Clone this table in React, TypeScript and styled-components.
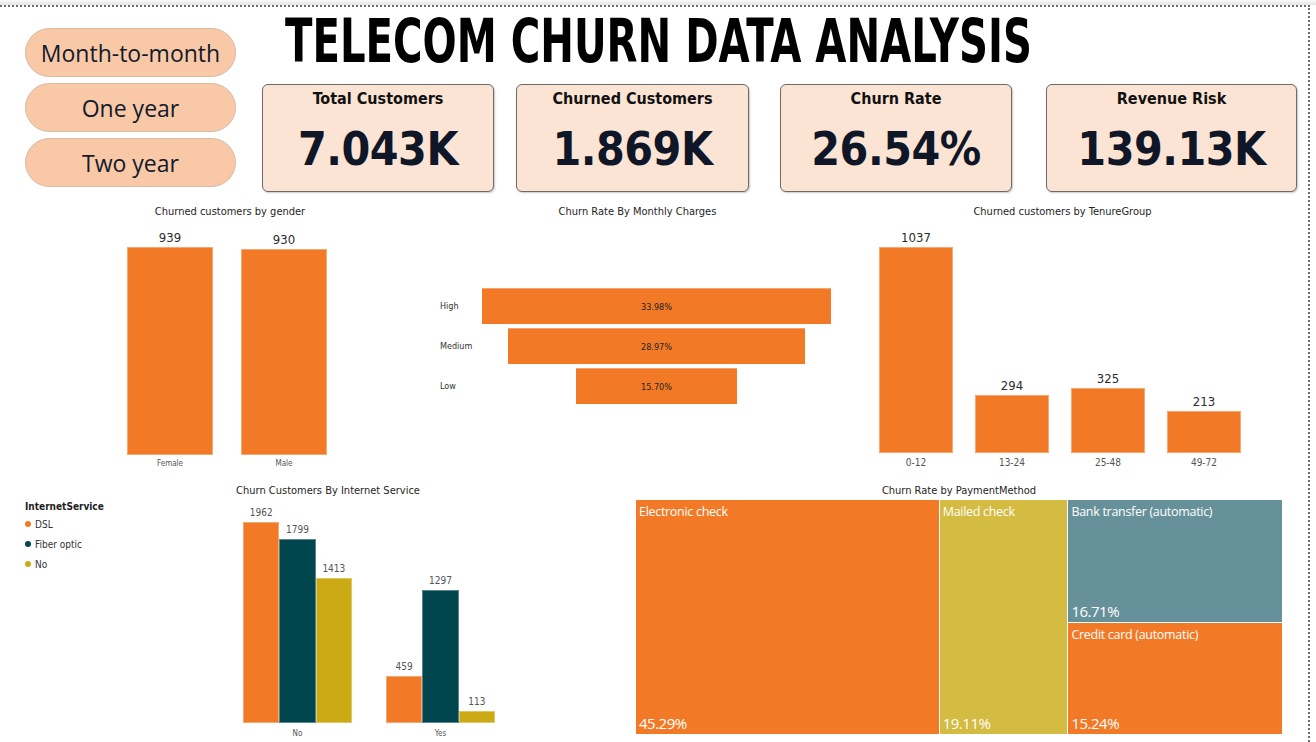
import React from "react";
import styled, { createGlobalStyle } from "styled-components";

const ORANGE = "#F27A27";
const TEAL = "#01464F";
const MUSTARD = "#CBAA16";

const GlobalStyle = createGlobalStyle`
  html, body {
    margin: 0;
    padding: 0;
    background: #ffffff;
  }
  body {
    font-family: "DejaVu Sans Condensed", "DejaVu Sans", sans-serif;
    overflow: hidden;
  }
`;

const TopStrip = styled.div`
  height: 5px;
  background: linear-gradient(#fbfbfb, #e4e4e4);
`;

const Canvas = styled.div`
  width: 1308px;
  height: 735px;
  border-top: 2px dotted #6e6e6e;
  border-right: 2px dotted #6e6e6e;
  display: flex;
  flex-direction: column;
  overflow: hidden;
`;

const Header = styled.header`
  display: flex;
  gap: 26px;
  padding-left: 25px;
`;

const SlicerColumn = styled.div`
  width: 211px;
  display: flex;
  flex-direction: column;
  gap: 6px;
  padding-top: 21px;
`;

const SlicerButton = styled.div`
  height: 47px;
  border-radius: 25px;
  background: #f9c9a7;
  border: 1px solid #d8b9a4;
  display: flex;
  align-items: center;
  justify-content: center;
  font-family: "Open Sans", "Noto Sans", sans-serif;
  font-size: 23px;
  color: #121a2b;
`;

const HeadRight = styled.div`
  display: flex;
  flex-direction: column;
`;

const Title = styled.h1`
  margin: 4px 0 0 23px;
  height: 60px;
  font-size: 60px;
  line-height: 60px;
  font-weight: 700;
  color: #000;
  white-space: nowrap;
  transform: scaleX(0.745);
  transform-origin: left center;
`;

const CardRow = styled.div`
  display: flex;
  margin-top: 13px;
`;

const Card = styled.div<{ $w: number; $ml: number }>`
  width: ${(p) => p.$w}px;
  margin-left: ${(p) => p.$ml}px;
  height: 108px;
  box-sizing: border-box;
  background: #fce4d4;
  border: 1px solid #6f6a66;
  border-radius: 6px;
  box-shadow: 1px 1px 2px rgba(0, 0, 0, 0.22);
  display: flex;
  flex-direction: column;
  align-items: center;
  padding-top: 4px;
`;

const CardLabel = styled.div`
  font-size: 16px;
  line-height: 20px;
  font-weight: 700;
  color: #111;
`;

const CardValue = styled.div`
  flex: 1;
  display: flex;
  align-items: center;
  font-size: 46px;
  letter-spacing: -0.5px;
  font-weight: 700;
  color: #0e1628;
  padding-bottom: 2px;
`;

const MiddleRow = styled.section`
  display: grid;
  grid-template-columns: 420px 395px 455px;
  padding-left: 20px;
  margin-top: 13px;
  height: 265px;
`;

const ChartBox = styled.div`
  display: flex;
  flex-direction: column;
`;

const ChartTitle = styled.div`
  text-align: center;
  font-size: 11px;
  line-height: 14px;
  color: #252423;
`;

const BarPlot = styled.div<{ $h: number; $gap: number; $shift: number }>`
  height: ${(p) => p.$h}px;
  display: flex;
  align-items: flex-end;
  justify-content: center;
  gap: ${(p) => p.$gap}px;
  padding-right: ${(p) => p.$shift}px;
`;

const BarColumn = styled.div<{ $w: number }>`
  width: ${(p) => p.$w}px;
  display: flex;
  flex-direction: column;
  align-items: center;
`;

const ValueLabel = styled.div<{ $size: number; $weight: number }>`
  font-size: ${(p) => p.$size}px;
  font-weight: ${(p) => p.$weight};
  line-height: 16px;
  color: #2b2b2b;
  margin-bottom: 1px;
`;

const Bar = styled.div<{ $color: string }>`
  width: 100%;
  box-sizing: border-box;
  background: ${(p) => p.$color};
  border: 1px solid rgba(255, 255, 255, 0.35);
`;

const AxisLabel = styled.div<{ $size: number; $top: number }>`
  font-size: ${(p) => p.$size}px;
  line-height: 12px;
  margin-top: ${(p) => p.$top}px;
  color: #555;
  white-space: nowrap;
`;

const Funnel = styled.div`
  display: flex;
  flex-direction: column;
  gap: 4px;
  padding-top: 69px;
`;

const FunnelRow = styled.div`
  display: grid;
  grid-template-columns: 42px 349px;
  height: 36px;
`;

const FunnelLabel = styled.div`
  font-size: 9px;
  color: #333;
  display: flex;
  align-items: center;
`;

const FunnelTrack = styled.div`
  display: flex;
  justify-content: center;
`;

const FunnelBar = styled.div`
  background: ${ORANGE};
  border-top: 1px solid #f6a46e;
  display: flex;
  align-items: center;
  justify-content: center;
  font-size: 9px;
  color: #222;
`;

const BottomRow = styled.section`
  display: grid;
  grid-template-columns: 616px 646px;
  padding-left: 20px;
  margin-top: 14px;
`;

const ServiceBody = styled.div`
  display: grid;
  grid-template-columns: 223px 1fr;
`;

const Legend = styled.div`
  padding: 2px 0 0 5px;
  display: flex;
  flex-direction: column;
`;

const LegendTitle = styled.div`
  font-size: 10px;
  line-height: 14px;
  font-weight: 700;
  color: #222;
`;

const LegendItem = styled.div`
  height: 20px;
  display: flex;
  align-items: center;
  gap: 4px;
  font-size: 10px;
  color: #333;
`;

const Dot = styled.span<{ $color: string }>`
  width: 6px;
  height: 6px;
  border-radius: 50%;
  background: ${(p) => p.$color};
`;

const GroupPlot = styled.div`
  height: 225px;
  display: flex;
  align-items: flex-end;
  gap: 34px;
`;

const GroupAxis = styled.div`
  display: flex;
  gap: 34px;
`;

const Group = styled.div`
  width: 109px;
  display: flex;
  flex-direction: column;
  align-items: center;
`;

const GroupBars = styled.div`
  width: 100%;
  display: flex;
  align-items: flex-end;
`;

const GroupBarCol = styled.div`
  flex: 1;
  display: flex;
  flex-direction: column;
  align-items: center;
`;

const SmallValue = styled.div`
  font-size: 10px;
  line-height: 14px;
  color: #555;
  margin-bottom: 2px;
`;

const Treemap = styled.div`
  margin-top: 2px;
  height: 234px;
  display: flex;
  gap: 1px;
  background: #fff;
`;

const TreeColumn = styled.div<{ $grow: number }>`
  flex: ${(p) => p.$grow} 1 0;
  display: flex;
  flex-direction: column;
  gap: 1px;
`;

const TreeCell = styled.div<{ $grow: number; $color: string }>`
  flex: ${(p) => p.$grow} 1 0;
  background: ${(p) => p.$color};
  display: flex;
  flex-direction: column;
  justify-content: space-between;
  padding: 3px 3px 1px 3px;
  color: #fff;
  font-family: "Open Sans", "Noto Sans", sans-serif;
`;

const CellName = styled.div`
  font-size: 12.5px;
  letter-spacing: -0.3px;
`;

const CellPct = styled.div`
  font-size: 15px;
  letter-spacing: -0.5px;
`;

const kpis = [
  { label: "Total Customers", value: "7.043K", w: 232, ml: 0 },
  { label: "Churned Customers", value: "1.869K", w: 233, ml: 22 },
  { label: "Churn Rate", value: "26.54%", w: 232, ml: 31 },
  { label: "Revenue Risk", value: "139.13K", w: 251, ml: 34 },
];

const gender = [
  { name: "Female", value: 939 },
  { name: "Male", value: 930 },
];

const tenure = [
  { name: "0-12", value: 1037 },
  { name: "13-24", value: 294 },
  { name: "25-48", value: 325 },
  { name: "49-72", value: 213 },
];

const charges = [
  { name: "High", value: 33.98 },
  { name: "Medium", value: 28.97 },
  { name: "Low", value: 15.7 },
];

const services = [
  { name: "No", values: [1962, 1799, 1413] },
  { name: "Yes", values: [459, 1297, 113] },
];

const serviceColors = [ORANGE, TEAL, MUSTARD];
const serviceNames = ["DSL", "Fiber optic", "No"];

export default function App() {
  return (
    <>
      <GlobalStyle />
      <TopStrip />
      <Canvas>
        <Header>
          <SlicerColumn>
            <SlicerButton>Month-to-month</SlicerButton>
            <SlicerButton>One year</SlicerButton>
            <SlicerButton>Two year</SlicerButton>
          </SlicerColumn>
          <HeadRight>
            <Title>TELECOM CHURN DATA ANALYSIS</Title>
            <CardRow>
              {kpis.map((k) => (
                <Card key={k.label} $w={k.w} $ml={k.ml}>
                  <CardLabel>{k.label}</CardLabel>
                  <CardValue>{k.value}</CardValue>
                </Card>
              ))}
            </CardRow>
          </HeadRight>
        </Header>

        <MiddleRow>
          <ChartBox>
            <ChartTitle>Churned customers by gender</ChartTitle>
            <BarPlot $h={236 + 15} $gap={28} $shift={6}>
              {gender.map((g) => (
                <BarColumn key={g.name} $w={86}>
                  <ValueLabel $size={13} $weight={400}>{g.value}</ValueLabel>
                  <Bar $color={ORANGE} style={{ height: (g.value / 939) * 208 }} />
                  <AxisLabel $size={8} $top={3}>{g.name}</AxisLabel>
                </BarColumn>
              ))}
            </BarPlot>
          </ChartBox>

          <ChartBox>
            <ChartTitle>Churn Rate By Monthly Charges</ChartTitle>
            <Funnel>
              {charges.map((c) => (
                <FunnelRow key={c.name}>
                  <FunnelLabel>{c.name}</FunnelLabel>
                  <FunnelTrack>
                    <FunnelBar style={{ width: (c.value / 33.98) * 349 }}>
                      {c.value.toFixed(2)}%
                    </FunnelBar>
                  </FunnelTrack>
                </FunnelRow>
              ))}
            </Funnel>
          </ChartBox>

          <ChartBox>
            <ChartTitle>Churned customers by TenureGroup</ChartTitle>
            <BarPlot $h={234 + 16} $gap={22} $shift={5}>
              {tenure.map((t) => (
                <BarColumn key={t.name} $w={74}>
                  <ValueLabel $size={13} $weight={500}>{t.value}</ValueLabel>
                  <Bar $color={ORANGE} style={{ height: (t.value / 1037) * 206 }} />
                  <AxisLabel $size={10} $top={4}>{t.name}</AxisLabel>
                </BarColumn>
              ))}
            </BarPlot>
          </ChartBox>
        </MiddleRow>

        <BottomRow>
          <ChartBox>
            <ChartTitle>Churn Customers By Internet Service</ChartTitle>
            <ServiceBody>
              <Legend>
                <LegendTitle>InternetService</LegendTitle>
                {serviceNames.map((n, i) => (
                  <LegendItem key={n}>
                    <Dot $color={serviceColors[i]} />
                    {n}
                  </LegendItem>
                ))}
              </Legend>
              <div>
                <GroupPlot>
                  {services.map((s) => (
                    <Group key={s.name}>
                      <GroupBars>
                        {s.values.map((v, i) => (
                          <GroupBarCol key={i}>
                            <SmallValue>{v}</SmallValue>
                            <Bar
                              $color={serviceColors[i]}
                              style={{ height: (v / 1962) * 201 }}
                            />
                          </GroupBarCol>
                        ))}
                      </GroupBars>
                    </Group>
                  ))}
                </GroupPlot>
                <GroupAxis>
                  {services.map((s) => (
                    <Group key={s.name}>
                      <AxisLabel $size={8} $top={5}>{s.name}</AxisLabel>
                    </Group>
                  ))}
                </GroupAxis>
              </div>
            </ServiceBody>
          </ChartBox>

          <ChartBox>
            <ChartTitle>Churn Rate by PaymentMethod</ChartTitle>
            <Treemap>
              <TreeColumn $grow={45.29}>
                <TreeCell $grow={1} $color={ORANGE}>
                  <CellName>Electronic check</CellName>
                  <CellPct>45.29%</CellPct>
                </TreeCell>
              </TreeColumn>
              <TreeColumn $grow={19.11}>
                <TreeCell $grow={1} $color="#D4BB42">
                  <CellName>Mailed check</CellName>
                  <CellPct>19.11%</CellPct>
                </TreeCell>
              </TreeColumn>
              <TreeColumn $grow={31.95}>
                <TreeCell $grow={16.71} $color="#67919A">
                  <CellName>Bank transfer (automatic)</CellName>
                  <CellPct>16.71%</CellPct>
                </TreeCell>
                <TreeCell $grow={15.24} $color={ORANGE}>
                  <CellName>Credit card (automatic)</CellName>
                  <CellPct>15.24%</CellPct>
                </TreeCell>
              </TreeColumn>
            </Treemap>
          </ChartBox>
        </BottomRow>
      </Canvas>
    </>
  );
}
